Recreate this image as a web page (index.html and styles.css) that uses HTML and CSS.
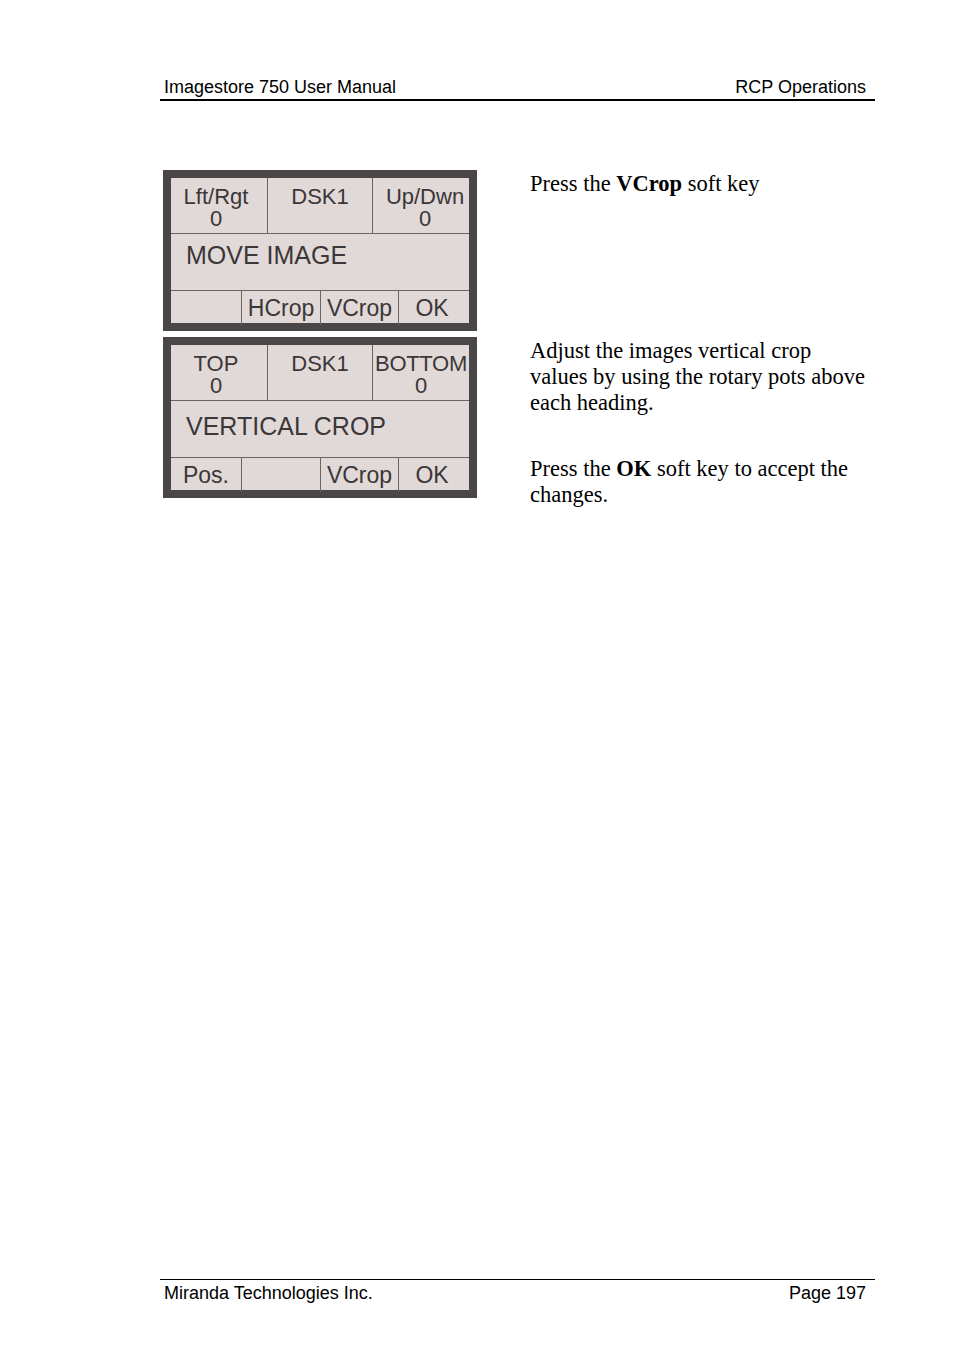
FILE: index.html
```html
<!DOCTYPE html>
<html>
<head>
<meta charset="utf-8">
<link rel="stylesheet" href="styles.css">
</head>
<body>
<div class="page">
  <header class="hdr">
    <span>Imagestore 750 User Manual</span>
    <span>RCP Operations</span>
  </header>

  <main class="content">
    <section class="step">
      <div class="lcd">
        <div class="top">
          <div class="cell first">Lft/Rgt<br>0</div>
          <div class="cell">DSK1</div>
          <div class="cell shift">Up/Dwn<br>0</div>
        </div>
        <div class="mid">MOVE IMAGE</div>
        <div class="bot">
          <div class="key"></div>
          <div class="key">HCrop</div>
          <div class="key">VCrop</div>
          <div class="key">OK</div>
        </div>
      </div>
      <div class="desc">
        <p>Press the <b>VCrop</b> soft key</p>
      </div>
    </section>

    <section class="step">
      <div class="lcd">
        <div class="top">
          <div class="cell first">TOP<br>0</div>
          <div class="cell">DSK1</div>
          <div class="cell tight">BOTTOM<br>0</div>
        </div>
        <div class="mid mid2">VERTICAL CROP</div>
        <div class="bot">
          <div class="key">Pos.</div>
          <div class="key"></div>
          <div class="key">VCrop</div>
          <div class="key">OK</div>
        </div>
      </div>
      <div class="desc">
        <p>Adjust the images vertical crop values by using the rotary pots above each heading.</p>
        <p class="gap">Press the <b>OK</b> soft key to accept the changes.</p>
      </div>
    </section>
  </main>

  <footer class="ftr">
    <span>Miranda Technologies Inc.</span>
    <span>Page 197</span>
  </footer>
</div>
</body>
</html>
```

FILE: styles.css
```css
html, body {
  margin: 0;
  padding: 0;
  background: #ffffff;
}

.page {
  width: 954px;
  height: 1352px;
  display: flex;
  flex-direction: column;
  color: #000;
}

.hdr {
  margin: 77px 79px 0 160px;
  padding: 0 9px 2px 4px;
  display: flex;
  justify-content: space-between;
  font-family: "Liberation Sans", Arial, sans-serif;
  font-size: 18px;
  line-height: 20px;
  border-bottom: 2px solid #000;
}

.content {
  margin: 69px 0 0 163px;
  display: flex;
  flex-direction: column;
  gap: 6px;
}

.step {
  display: flex;
  align-items: flex-start;
  gap: 53px;
}

.lcd {
  flex: none;
  width: 298px;
  border: 8px solid #4a4546;
  background: #e0d9d7;
  color: #3b3637;
  font-family: "Liberation Sans", Arial, sans-serif;
}

.top {
  display: grid;
  grid-template-columns: 97px 105px 96px;
  height: 56px;
  box-sizing: border-box;
  border-bottom: 1px solid #6a6364;
}

.cell {
  box-sizing: border-box;
  padding-top: 8px;
  font-size: 22px;
  line-height: 22px;
  text-align: center;
  border-right: 1px solid #6a6364;
}

.cell:last-child {
  border-right: none;
}

.first {
  padding-right: 6px;
}

.shift {
  padding-left: 8px;
}

.tight {
  letter-spacing: -0.3px;
  white-space: nowrap;
}

.mid {
  height: 57px;
  box-sizing: border-box;
  padding: 7px 0 0 15px;
  font-size: 25px;
  line-height: 28px;
  border-bottom: 1px solid #6a6364;
}

.mid2 {
  padding-top: 11px;
}

.bot {
  display: grid;
  grid-template-columns: 71px 79px 78px 70px;
  height: 32px;
}

.key {
  box-sizing: border-box;
  font-size: 23px;
  line-height: 34px;
  text-align: center;
  white-space: nowrap;
  border-right: 1px solid #6a6364;
}

.key:last-child {
  border-right: none;
  padding-right: 4px;
}

.desc {
  width: 341px;
  padding-top: 1px;
  font-family: "Liberation Serif", "Times New Roman", serif;
  font-size: 22.5px;
  line-height: 26px;
}

.desc p {
  margin: 0;
}

.desc .gap {
  margin-top: 40px;
}

.ftr {
  margin: auto 79px 0 160px;
  margin-bottom: 49px;
  padding: 3px 9px 0 4px;
  display: flex;
  justify-content: space-between;
  font-family: "Liberation Sans", Arial, sans-serif;
  font-size: 18px;
  line-height: 20px;
  border-top: 1px solid #000;
}
```
